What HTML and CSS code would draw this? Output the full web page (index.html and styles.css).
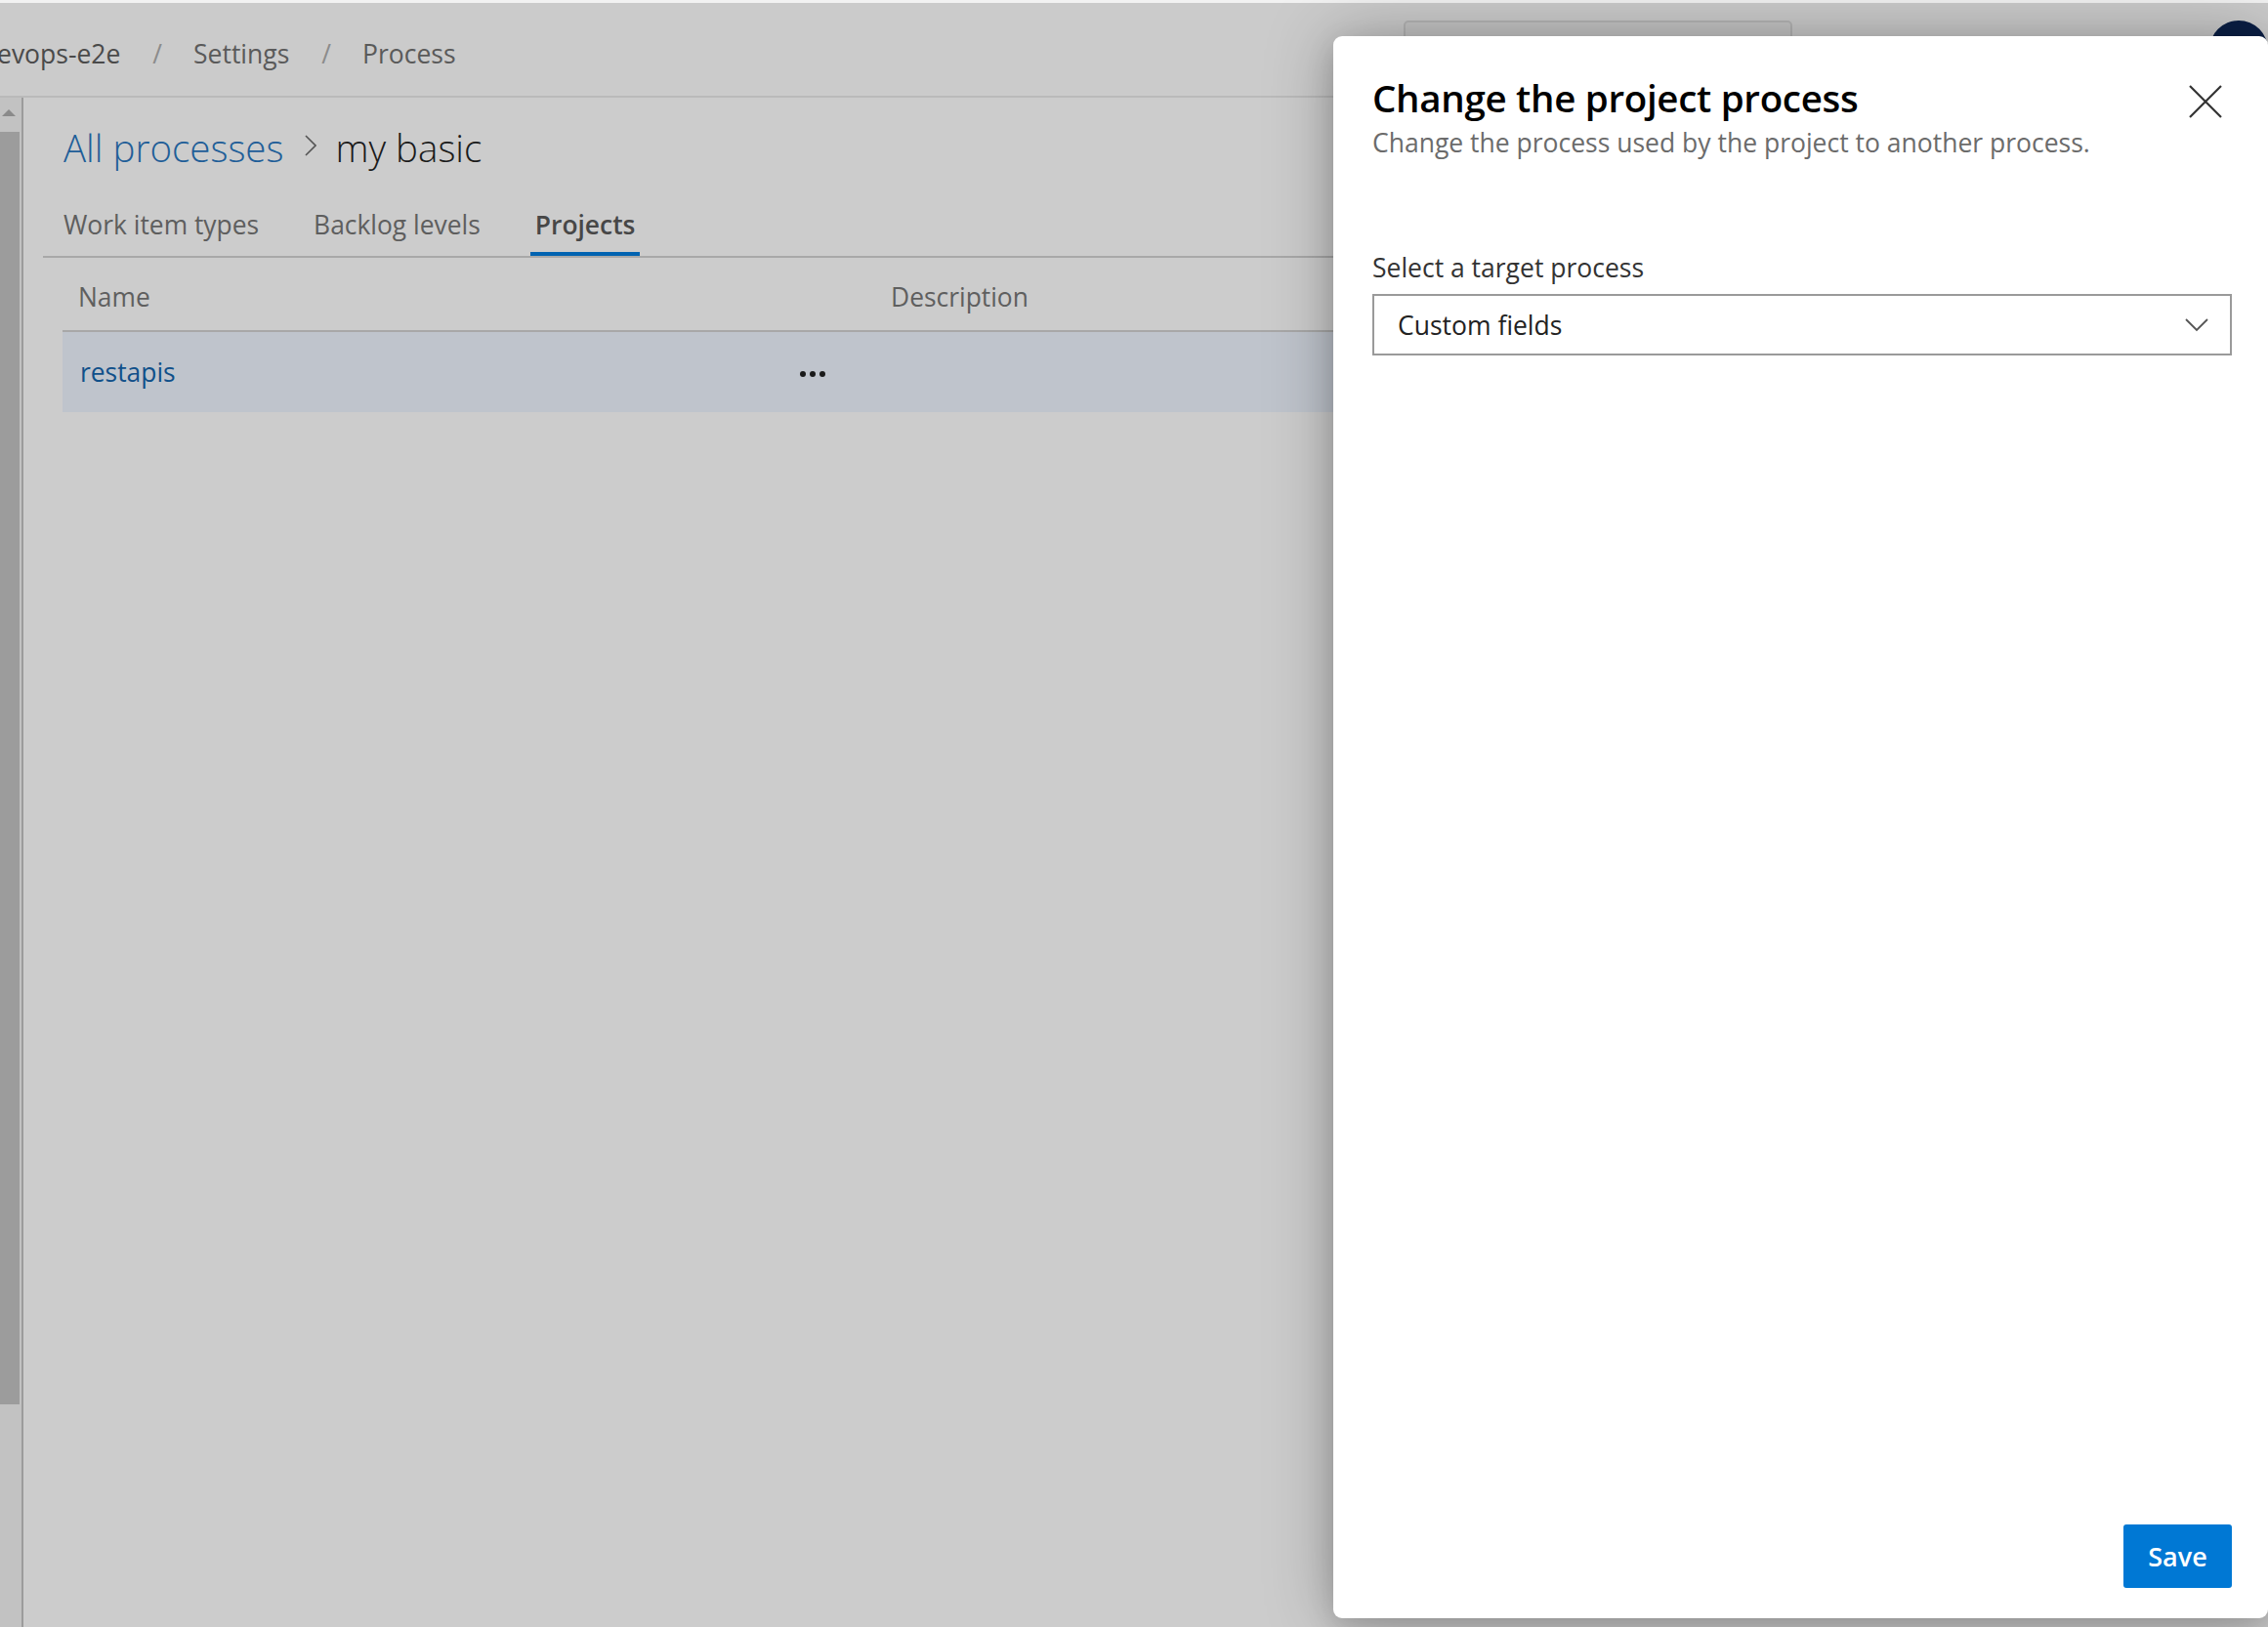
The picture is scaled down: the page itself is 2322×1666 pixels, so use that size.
FILE: index.html
```html
<!DOCTYPE html>
<html lang="en">
<head>
<meta charset="utf-8">
<title>Change the project process</title>
<link rel="stylesheet" href="styles.css">
</head>
<body>
<div class="page">
  <div class="topstrip"></div>
  <header class="header">
    <nav class="crumbs">
      <span class="crumb first">evops-e2e</span>
      <span class="sep">/</span>
      <span class="crumb">Settings</span>
      <span class="sep">/</span>
      <span class="crumb">Process</span>
    </nav>
    <div class="search"></div>
    <div class="avatar"></div>
  </header>
  <div class="body">
    <div class="scrollbar">
      <div class="arrow"></div>
      <div class="thumb"></div>
    </div>
    <main class="main">
      <h1 class="heading"><span class="link">All processes</span><svg class="chev" width="12" height="22" viewBox="0 0 12 22"><path d="M1 1 L11 11 L1 21" stroke="#555" stroke-width="1.6" fill="none"/></svg><span class="current">my basic</span></h1>
      <div class="tabs">
        <div class="tab">Work item types</div>
        <div class="tab">Backlog levels</div>
        <div class="tab active">Projects</div>
      </div>
      <div class="table">
        <div class="thead">
          <div class="col name">Name</div>
          <div class="col desc">Description</div>
        </div>
        <div class="row">
          <div class="col name"><span class="plink">restapis</span><span class="more"><i></i><i></i><i></i></span></div>
          <div class="col desc"></div>
        </div>
      </div>
    </main>
  </div>

  <aside class="panel">
    <div class="panel-head">
      <div class="titles">
        <h2 class="ptitle">Change the project process</h2>
        <p class="psub">Change the process used by the project to another process.</p>
      </div>
      <button class="close" aria-label="Close">
        <svg width="34" height="34" viewBox="0 0 34 34"><path d="M1 1 L33 33 M33 1 L1 33" stroke="#333" stroke-width="2.2" fill="none"/></svg>
      </button>
    </div>
    <label class="flabel">Select a target process</label>
    <div class="dropdown">
      <span class="dval">Custom fields</span>
      <svg class="dchev" width="24" height="14" viewBox="0 0 24 14"><path d="M1 1 L12 12 L23 1" stroke="#555" stroke-width="1.8" fill="none"/></svg>
    </div>
    <div class="pfoot">
      <button class="save">Save</button>
    </div>
  </aside>
</div>
</body>
</html>
```

FILE: styles.css
```css
* { box-sizing: border-box; }
html, body { margin: 0; padding: 0; }
body {
  width: 2322px;
  height: 1666px;
  overflow: hidden;
  background: #cccccc;
  font-family: "Open Sans", "Noto Sans", sans-serif;
  color: #333;
}
.page {
  position: relative;
  width: 2322px;
  height: 1666px;
  display: flex;
  flex-direction: column;
}
.topstrip { height: 3px; background: #f2f2f2; flex-shrink: 0; }
.header {
  height: 97px;
  flex-shrink: 0;
  background: #cbcbcb;
  border-bottom: 2px solid #bababa;
  display: flex;
  align-items: flex-start;
}
.crumbs {
  display: flex;
  align-items: center;
  padding-top: 34px;
  font-size: 26.5px;
  line-height: 36px;
  color: #5a5a5a;
  margin-left: -3px;
}
.crumb.first { color: #4a4a4a; }
.sep { color: #8c8c8c; margin: 0 32px 0 33px; }
.search {
  margin-left: auto;
  margin-top: 18px;
  width: 398px;
  height: 60px;
  border: 2px solid #b5b5b5;
  border-radius: 5px;
  background: #c6c6c6;
}
.avatar {
  margin-left: 427px;
  margin-top: 18px;
  width: 60px;
  height: 60px;
  flex-shrink: 0;
  border-radius: 50%;
  background: #0b1f45;
}
.body { flex: 1; display: flex; min-height: 0; }
.scrollbar {
  width: 24px;
  flex-shrink: 0;
  background: #c2c2c2;
  border-right: 2px solid #9c9c9c;
  padding-top: 12px;
}
.arrow {
  width: 0; height: 0;
  margin-left: 2px;
  border-left: 7px solid transparent;
  border-right: 7px solid transparent;
  border-bottom: 7px solid #8a8a8a;
}
.thumb {
  margin-top: 16px;
  width: 20px;
  height: 1303px;
  background: #9c9c9c;
}
.main { flex: 1; padding-left: 20px; min-width: 0; }
.heading {
  margin: 26px 0 0 21px;
  font-size: 38.5px;
  line-height: 50px;
  font-weight: 300;
  display: flex;
  align-items: center;
}
.link { color: #1f5e98; }
.chev { display: block; margin: 0 19px 0 22px; position: relative; top: -2px; }
.current { color: #1b1b1b; }
.tabs {
  display: flex;
  gap: 46px;
  padding-left: 16px;
  border-bottom: 2px solid #a8a8a8;
}
.tab {
  font-size: 26.4px;
  line-height: 36px;
  padding: 36px 5px 10px;
  color: #5e5e5e;
  border-bottom: 4px solid transparent;
}
.tab.active { color: #474747; font-weight: 600; border-bottom-color: #0063b1; }
.table { margin-left: 20px; }
.thead, .row { display: flex; }
.thead {
  border-bottom: 2px solid #a8a8a8;
  font-size: 26.4px;
  line-height: 36px;
  color: #5f5f5f;
  padding: 22px 0 16px;
}
.col.name { width: 832px; padding-left: 16px; display: flex; align-items: center; }
.col.desc { flex: 1; padding-left: 16px; }
.row {
  height: 82px;
  background: #bfc4cc;
  align-items: center;
  font-size: 26.4px;
}
.row .col.name { padding-left: 18px; }
.plink { color: #10508a; }
.more {
  display: flex;
  gap: 4px;
  margin-left: 639px;
  margin-top: 4px;
}
.more i { width: 6px; height: 6px; border-radius: 50%; background: #1a1a1a; display: block; }

.panel {
  position: absolute;
  left: 1365px;
  top: 37px;
  right: 0;
  height: 1620px;
  background: #fff;
  border-radius: 9px;
  box-shadow: 0 0 70px rgba(0,0,0,0.28), 0 10px 28px rgba(0,0,0,0.15);
  padding: 41px 37px 31px 40px;
  display: flex;
  flex-direction: column;
}
.panel-head { display: flex; align-items: flex-start; }
.titles { flex: 1; }
.ptitle {
  margin: 0;
  font-size: 38.5px;
  line-height: 44px;
  font-weight: 600;
  color: #000;
  letter-spacing: -0.3px;
}
.psub {
  margin: 6px 0 0;
  font-size: 26.5px;
  line-height: 36px;
  color: #6b6b6b;
}
.close {
  border: 0;
  background: none;
  padding: 0;
  margin: 9px 10px 0 0;
  width: 34px;
  height: 34px;
  cursor: pointer;
}
.close svg { display: block; }
.flabel {
  display: block;
  margin-top: 92px;
  font-size: 26.5px;
  line-height: 36px;
  color: #333;
}
.dropdown {
  margin-top: 9px;
  height: 63px;
  border: 2px solid #9a9a9a;
  display: flex;
  align-items: center;
  padding: 0 22px 0 24px;
}
.dval { flex: 1; font-size: 26.5px; color: #222; }
.dchev { display: block; }
.pfoot { margin-top: auto; display: flex; justify-content: flex-end; }
.save {
  width: 111px;
  height: 65px;
  border: 0;
  border-radius: 3px;
  background: #0078d4;
  color: #fff;
  font-family: inherit;
  font-size: 27px;
  font-weight: 600;
  padding: 0;
}
```
